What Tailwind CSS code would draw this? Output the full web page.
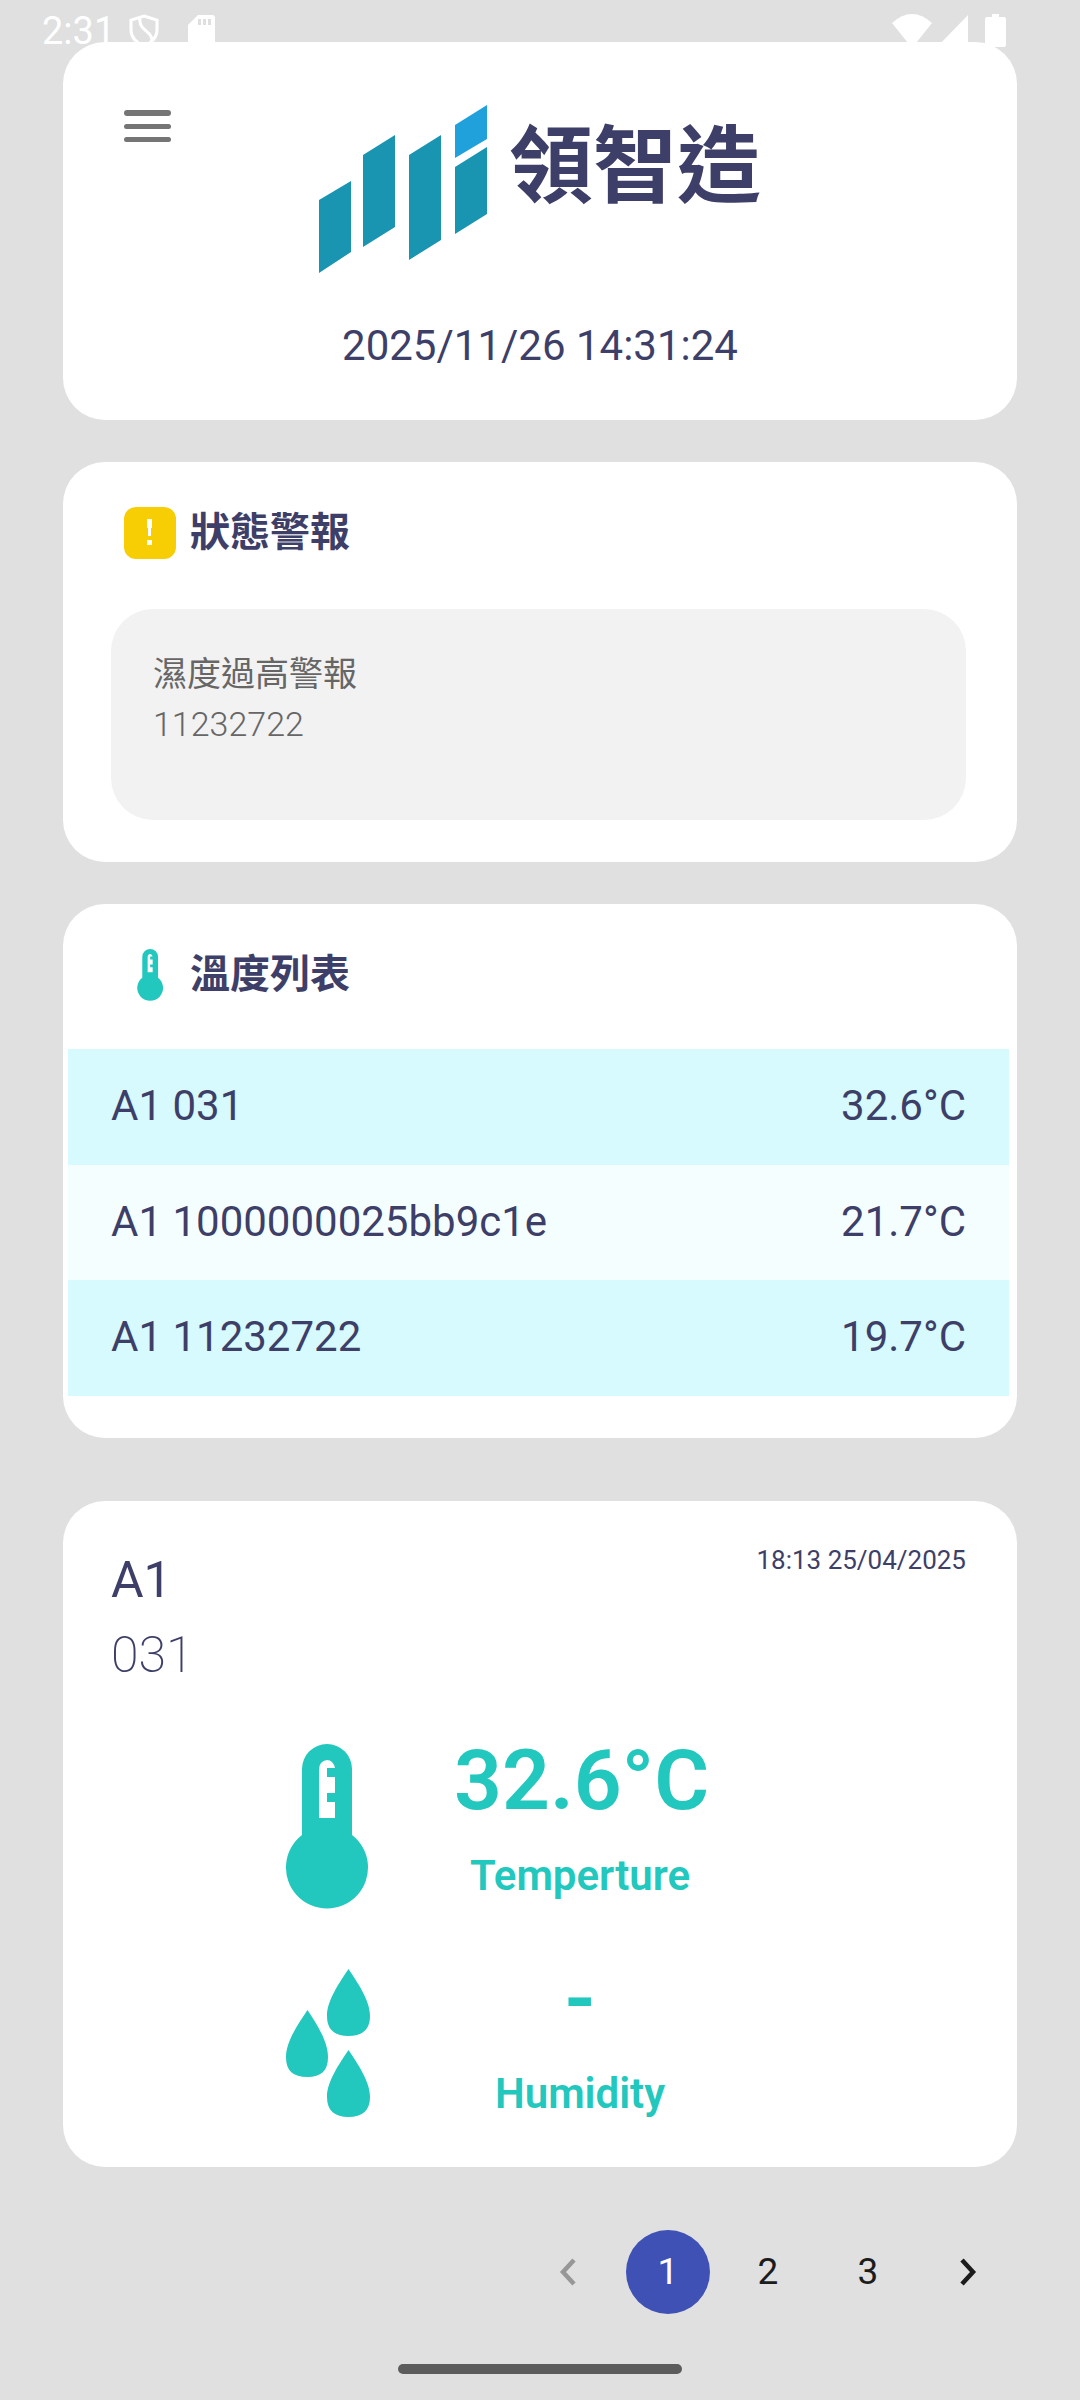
<!DOCTYPE html>
<html lang="zh-Hant">
<head>
  <meta charset="UTF-8">
  <meta name="viewport" content="width=device-width, initial-scale=1.0">
  <title>領智造</title>
  <script src="https://cdn.jsdelivr.net/npm/@tailwindcss/browser@4"></script>
</head>
<body class="min-h-screen bg-[#e0e0e0] font-['Roboto','Noto_Sans_CJK_TC',sans-serif] text-[#3e3f68]">

  <!-- Status bar, the first card slides under it -->
  <div class="relative z-10 flex h-[42px] items-start justify-between pl-[42px] pr-[74px] pt-[14px] text-white">
    <div class="flex items-start">
      <span class="text-[38px] leading-[35px]">2:31</span>
      <svg class="ml-[13px] h-[34px] w-[32px]" viewBox="0 0 32 34" fill="none" stroke="currentColor" stroke-width="3">
        <path d="M16 2 L29 6 V16 C29 25 23 29 16 32 C9 29 3 25 3 16 V6 Z"/>
        <path d="M12 3 C10 18 25 16 24 28"/>
      </svg>
      <svg class="ml-[28px] h-[34px] w-[27px]" viewBox="0 0 27 34">
        <path fill="currentColor" d="M10 1 H24 Q27 1 27 4 V31 Q27 34 24 34 H3 Q0 34 0 31 V11 Z"/>
        <path fill="#dfdfdf" d="M10 5h3v6h-3z M15 5h3v6h-3z M20 5h3v6h-3z"/>
      </svg>
    </div>
    <div class="flex items-start">
      <svg class="h-[34px] w-[40px]" viewBox="0 0 40 34" fill="currentColor"><path d="M0 9 Q20 -9 40 9 L20 34 Z"/></svg>
      <svg class="ml-[5px] h-[34px] w-[32px]" viewBox="0 0 32 34" fill="currentColor"><path d="M31 1 V33 H0 Z"/></svg>
      <svg class="ml-[16px] h-[34px] w-[21px]" viewBox="0 0 21 34" fill="currentColor"><path d="M7 0 H14 V3 H19 Q21 3 21 5 V31 Q21 33 19 33 H2 Q0 33 0 31 V5 Q0 3 2 3 H7 Z"/></svg>
    </div>
  </div>

  <main class="px-[63px]">
    <header class="rounded-[42px] bg-white px-[61px] pb-[43px] pt-[63px]">
      <div class="grid grid-cols-[1fr_auto_1fr] items-start">
        <button type="button" aria-label="選單" class="flex h-[42px] w-[47px] items-center justify-center text-[#757575]">
          <svg class="h-[33px] w-[47px]" viewBox="0 0 47 33" fill="currentColor">
            <rect y="0" width="47" height="6" rx="3"/>
            <rect y="14" width="47" height="5" rx="2.5"/>
            <rect y="27" width="47" height="5" rx="2.5"/>
          </svg>
        </button>
        <div class="flex gap-[22px]">
          <svg class="h-[168px] w-[168px]" viewBox="0 0 168 168">
            <g fill="#1994b1">
              <path d="M0 95 L32 76 V147 L0 168 Z"/>
              <path d="M44 50 L76 30 V122 L44 142 Z"/>
              <path d="M90 50 L122 30 V135 L90 155 Z"/>
              <path d="M136 62 L168 42 V109 L136 129 Z"/>
            </g>
            <path fill="#20a1dc" d="M136 20 L168 0 V34 L136 53 Z"/>
          </svg>
          <h1 class="text-[84px] font-bold leading-[126px]">領智造</h1>
        </div>
      </div>
      <p id="clock" class="mt-[41px] text-center text-[42px] leading-[63px]">2025/11/26 14:31:24</p>
    </header>

    <section class="mt-[42px] rounded-[42px] bg-white py-[42px]">
      <div class="flex h-[58px] items-center gap-[14px] px-[61px]">
        <svg class="size-[52px]" viewBox="0 0 52 52">
          <rect width="52" height="52" rx="12" fill="#f7cd03"/>
          <path fill="#fff" d="M23 12 H28 V21 H27 V29 H24 V21 H23 Z M23 33 H28 V38 H23 Z"/>
        </svg>
        <h2 class="text-[40px] font-bold">狀態警報</h2>
      </div>
      <div class="ml-[48px] mr-[51px] mt-[47px] h-[211px] rounded-[42px] bg-[#f2f2f2] px-[42px] pt-10 text-[34px] leading-[50px] text-[#666]">
        <p>濕度過高警報</p>
        <p class="font-light">11232722</p>
      </div>
    </section>

    <section class="mt-[42px] rounded-[42px] bg-white py-[42px]">
      <div class="flex h-[58px] items-center gap-[14px] px-[61px]">
        <svg class="size-[52px]" viewBox="-42 0 165 165">
          <path fill="#22c7bd" fill-rule="evenodd" d="M16 25 A25 25 0 0 1 66 25 V91 A41 41 0 1 1 16 91 Z M33 74 H49 V58 H41 V49 H49 V33 H41 V24 H49 Q47 16 41 16 Q33 17 33 26 Z"/>
        </svg>
        <h2 class="text-[40px] font-bold">溫度列表</h2>
      </div>
      <div class="ml-[5px] mr-[8px] mt-[45px]">
        <table class="w-full text-[42px] leading-[63px]">
          <tbody>
            <tr class="h-[116px] bg-[#d7fafe]">
              <td class="pb-[3px] pl-[43px]">A1 031</td>
              <td class="pb-[3px] pr-[43px] text-right">32.6°C</td>
            </tr>
            <tr class="h-[115px] bg-[#f5feff]">
              <td class="pb-[3px] pl-[43px]">A1 1000000025bb9c1e</td>
              <td class="pb-[3px] pr-[43px] text-right">21.7°C</td>
            </tr>
            <tr class="h-[116px] bg-[#d7fafe]">
              <td class="pb-[3px] pl-[43px]">A1 11232722</td>
              <td class="pb-[3px] pr-[43px] text-right">19.7°C</td>
            </tr>
          </tbody>
        </table>
      </div>
    </section>

    <section class="mt-[63px] rounded-[42px] bg-white pb-[42px] pl-[48px] pr-[51px] pt-[42px]">
      <div class="flex items-start justify-between">
        <div class="text-[50px] leading-[75px]">
          <h2>A1</h2>
          <p class="font-extralight">031</p>
        </div>
        <p class="text-[26px] leading-[34px]">18:13 25/04/2025</p>
      </div>
      <div class="mt-[25px] flex flex-col gap-[27px] pl-[175px] font-semibold text-[#22c7bd]">
        <div class="flex items-start gap-[84px]">
          <svg class="mt-[26px] h-[165px] w-[84px]" viewBox="0 0 84 165">
            <path fill="currentColor" fill-rule="evenodd" d="M16 25 A25 25 0 0 1 66 25 V91 A41 41 0 1 1 16 91 Z M33 74 H49 V58 H41 V49 H49 V33 H41 V24 H49 Q47 16 41 16 Q33 17 33 26 Z"/>
          </svg>
          <div class="w-[252px] whitespace-nowrap text-center">
            <p class="text-[84px] leading-[126px]">32.6°C</p>
            <p class="text-[42px] leading-[63px]">Temperture</p>
          </div>
        </div>
        <div class="flex items-start gap-[84px]">
          <svg class="mt-[26px] h-[155px] w-[84px]" viewBox="0 -7 84 155">
            <g fill="currentColor">
              <path d="M62.500 0 C71 13 84 31 84 47 C84 61 76 67 62.500 67 C49 67 41 61 41 47 C41 31 54 13 62.500 0 Z"/>
              <path d="M21.500 41 C30 54 42 72 42 88 C42 102 35 108 21.500 108 C7 108 0 102 0 88 C0 72 13 54 21.500 41 Z"/>
              <path d="M62.500 81 C71 94 84 112 84 128 C84 142 76 148 62.500 148 C49 148 41 142 41 128 C41 112 54 94 62.500 81 Z"/>
            </g>
          </svg>
          <div class="w-[252px] text-center">
            <p class="text-[84px] leading-[126px]">-</p>
            <p class="text-[42px] leading-[63px]">Humidity</p>
          </div>
        </div>
      </div>
    </section>

    <nav aria-label="pagination" class="mt-[63px] flex justify-end gap-4 pr-[7px] text-[37px] text-[#1c1c1c]">
      <button type="button" aria-label="上一頁" disabled class="flex size-[84px] items-center justify-center text-[#979797]">
        <svg class="h-[34px] w-[18px]" viewBox="0 0 18 34" fill="none" stroke="currentColor" stroke-width="4.500"><path d="M15 5 L4 17 L15 29"/></svg>
      </button>
      <button type="button" aria-current="page" class="size-[84px] rounded-full bg-[#3f51b5] text-white">1</button>
      <button type="button" class="size-[84px] rounded-full">2</button>
      <button type="button" class="size-[84px] rounded-full">3</button>
      <button type="button" aria-label="下一頁" class="flex size-[84px] items-center justify-center">
        <svg class="h-[34px] w-[18px]" viewBox="0 0 18 34" fill="none" stroke="currentColor" stroke-width="4.500"><path d="M3 5 L14 17 L3 29"/></svg>
      </button>
    </nav>
  </main>

  <div class="mx-auto mt-[50px] h-[10px] w-[284px] rounded-full bg-[#5c5c5c]"></div>
</body>
</html>
